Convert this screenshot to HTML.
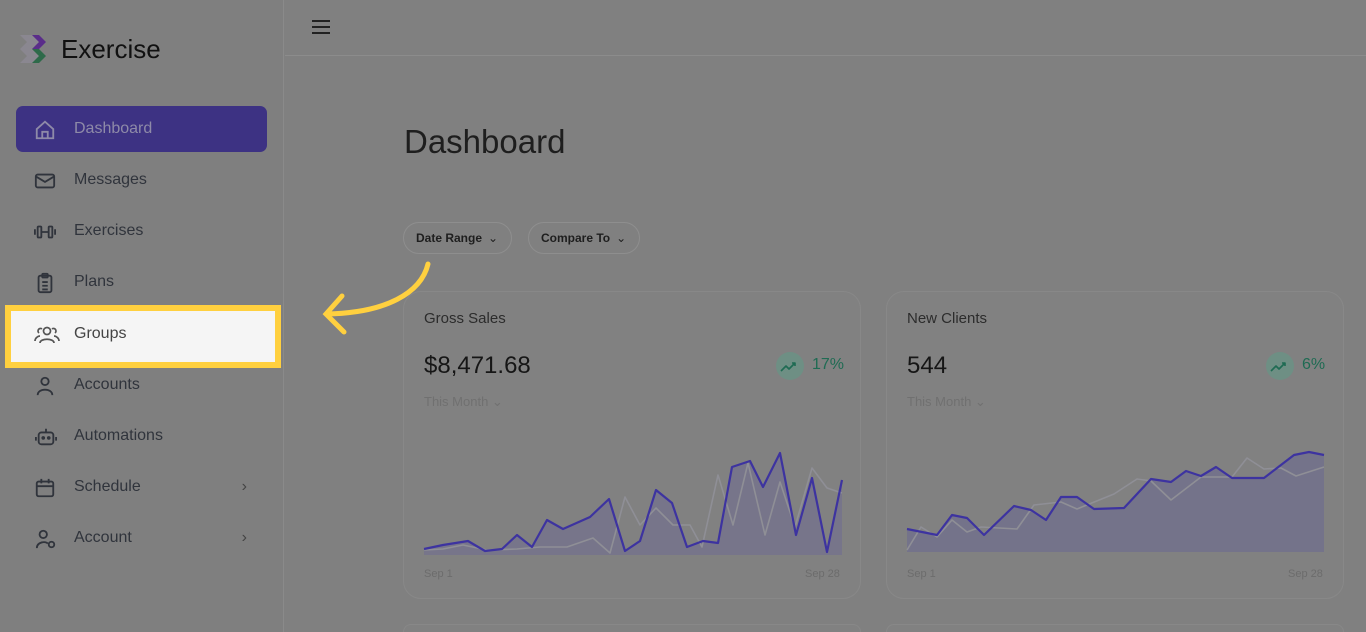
<!DOCTYPE html>
<html style="width:1366px;height:632px;overflow:hidden"><head><meta charset="utf-8"><style>
*{margin:0;padding:0;box-sizing:border-box}
body{width:1366px;height:632px;overflow:hidden;background:#808080;font-family:"Liberation Sans",sans-serif;position:relative}
.side{position:absolute;left:0;top:0;width:284px;height:632px;background:#7f7f7f;border-right:1px solid #8a8a8a}
.top{position:absolute;left:285px;top:0;right:0;height:56px;border-bottom:1px solid #8c8c8c}
.nav{position:absolute;left:16px;width:251px;height:46px;display:flex;align-items:center;color:#30343c;font-size:16px}
.nav svg{position:absolute;left:18px;top:13px}
.nav span{position:absolute;left:58px}
.card{position:absolute;top:291px;width:458px;height:308px;background:#818181;border:1px solid #888;border-radius:18px}
.t{position:absolute;color:#2e2e2e}
.pill{position:absolute;top:222px;height:32px;border:1px solid #8e8e8e;border-radius:16px;font-size:12px;font-weight:bold;color:#1e1e1e;display:flex;align-items:center;padding-left:12px}
</style></head><body>
<div class="side">
 <svg style="position:absolute;left:18px;top:33px" width="34" height="32" viewBox="0 0 34 32"><path d="M2 2h12l7 7-7 7 7 7-7 7H2l7-7-7-7 7-7z" fill="#8a8790"/><path d="M14 2h7l7 7-7 7h-7l7-7z" fill="#5a2d8a"/><path d="M14 16h7l7 7-7 7h-7l7-7z" fill="#2e6a4a"/></svg>
 <div class="t" style="left:61px;top:34px;font-size:26px;color:#111">Exercise</div>
 <div class="nav" style="top:106px;background:#3d3283;border-radius:7px;color:#8e8aa8"><svg width="22" height="22" viewBox="0 0 24 24" fill="none" stroke="#8e8aa8" stroke-width="2"><path d="M3 11l9-8 9 8v10H3z M9 21v-7h6v7"/></svg><span>Dashboard</span></div>
 <div class="nav" style="top:157px"><svg width="22" height="22" viewBox="0 0 24 24" fill="none" stroke="#30343c" stroke-width="2"><rect x="2" y="5" width="20" height="14" rx="2"/><path d="M2 7l10 6 10-6"/></svg><span>Messages</span></div>
 <div class="nav" style="top:208px"><svg width="22" height="22" viewBox="0 0 24 24" fill="none" stroke="#30343c" stroke-width="2"><rect x="4" y="6" width="4" height="12" rx="1"/><rect x="16" y="6" width="4" height="12" rx="1"/><path d="M8 12h8M1 9v6M23 9v6"/></svg><span>Exercises</span></div>
 <div class="nav" style="top:259px"><svg width="22" height="22" viewBox="0 0 24 24" fill="none" stroke="#30343c" stroke-width="2"><rect x="5" y="4" width="14" height="18" rx="2"/><rect x="9" y="2" width="6" height="4" rx="1"/><path d="M9 11h6M9 15h6M9 19h6"/></svg><span>Plans</span></div>
 <div style="position:absolute;left:5px;top:305px;width:276px;height:63px;border:6px solid #ffd03f;background:#f5f5f5"></div>
 <div class="nav" style="top:311px;color:#444"><svg width="26" height="22" viewBox="0 0 26 22" fill="none" stroke="#555" stroke-width="1.7"><circle cx="13" cy="7" r="3.5"/><path d="M6 19c0-5 14-5 14 0M1 17c0-3 3-5 5-5M25 17c0-3-3-5-5-5M5 9a2.5 2.5 0 1 1 3-4M21 9a2.5 2.5 0 1 0-3-4"/></svg><span>Groups</span></div>
 <div class="nav" style="top:362px"><svg width="22" height="22" viewBox="0 0 24 24" fill="none" stroke="#30343c" stroke-width="2"><circle cx="12" cy="7" r="4"/><path d="M4 22c0-8 16-8 16 0"/></svg><span>Accounts</span></div>
 <div class="nav" style="top:413px"><svg width="24" height="22" viewBox="0 0 24 24" fill="none" stroke="#30343c" stroke-width="2"><rect x="4" y="7" width="16" height="13" rx="3"/><path d="M12 3v4M1 12v4M23 12v4"/><circle cx="9" cy="13" r="1"/><circle cx="15" cy="13" r="1"/></svg><span>Automations</span></div>
 <div class="nav" style="top:464px"><svg width="22" height="22" viewBox="0 0 24 24" fill="none" stroke="#30343c" stroke-width="2"><rect x="3" y="5" width="18" height="16" rx="2"/><path d="M3 10h18M8 2v5M16 2v5"/></svg><span>Schedule</span><b style="position:absolute;right:20px;font-weight:normal;color:#444">›</b></div>
 <div class="nav" style="top:515px"><svg width="24" height="22" viewBox="0 0 24 24" fill="none" stroke="#30343c" stroke-width="2"><circle cx="9" cy="7" r="4"/><path d="M2 22c0-7 10-8 12-5"/><circle cx="18" cy="18" r="3"/></svg><span>Account</span><b style="position:absolute;right:20px;font-weight:normal;color:#444">›</b></div>
</div>
<div class="top"><div style="position:absolute;left:27px;top:20px;width:18px;height:2px;background:#222;box-shadow:0 6px 0 #222,0 12px 0 #222"></div></div>
<div class="t" style="left:404px;top:123px;font-size:33px;color:#1e1e1e">Dashboard</div>
<div class="pill" style="left:403px;width:109px">Date Range <span style="margin-left:6px;font-weight:normal">⌄</span></div>
<div class="pill" style="left:528px;width:112px">Compare To <span style="margin-left:6px;font-weight:normal">⌄</span></div>
<svg style="position:absolute;left:316px;top:258px" width="120" height="80" viewBox="0 0 120 80" fill="none" stroke="#ffd03f" stroke-width="5" stroke-linecap="round"><path d="M112 6C105 35 70 55 10 56M26 38L10 56 28 74"/></svg>

<div class="card" style="left:403px"></div>
<div class="card" style="left:886px"></div>
<div class="t" style="left:424px;top:310px;font-size:15px;color:#2c2c2c">Gross Sales</div>
<div class="t" style="left:424px;top:352px;font-size:24px;color:#161616">$8,471.68</div>
<div class="t" style="left:424px;top:394px;font-size:13px;color:#707070">This Month ⌄</div>
<div style="position:absolute;left:776px;top:352px;width:28px;height:28px;border-radius:50%;background:#6e8f84"></div>
<div class="t" style="left:812px;top:356px;font-size:16px;color:#1f6b53">17%</div>
<div class="t" style="left:907px;top:310px;font-size:15px;color:#2c2c2c">New Clients</div>
<div class="t" style="left:907px;top:352px;font-size:24px;color:#161616">544</div>
<div class="t" style="left:907px;top:394px;font-size:13px;color:#707070">This Month ⌄</div>
<div style="position:absolute;left:1266px;top:352px;width:28px;height:28px;border-radius:50%;background:#6e8f84"></div>
<div class="t" style="left:1302px;top:356px;font-size:16px;color:#1f6b53">6%</div>
<svg style="position:absolute;left:0;top:0" width="1366" height="632" fill="none" stroke-linejoin="round" stroke-width="2.2">
<path d="M781 371l5-5 3 3 6-6M792 363h3v3M1271 371l5-5 3 3 6-6M1282 363h3v3" stroke="#1f6b53" stroke-width="1.6"/>
<polygon points="424,549 443,545 468,541 485,551 502,549 517,535 532,547 547,520 563,529 590,517 609,499 625,551 640,541 656,490 672,503 687,547 703,541 718,543 732,467 750,461 763,487 780,453 796,535 812,478 827,552 842,480 842,555 424,555" fill="#77758a" stroke="none"/>
<polyline points="424,550 443,549 463,545 487,550 517,549 540,547 567,547 593,538 610,553 625,497 640,525 656,508 673,525 690,525 702,547 718,475 733,525 748,463 765,535 780,482 795,527 812,468 827,488 842,493" stroke="#8f8f96" stroke-width="1.6"/>
<polyline points="424,549 443,545 468,541 485,551 502,549 517,535 532,547 547,520 563,529 590,517 609,499 625,551 640,541 656,490 672,503 687,547 703,541 718,543 732,467 750,461 763,487 780,453 796,535 812,478 827,552 842,480" stroke="#3d33a0"/>
<polygon points="907,529 937,535 952,515 967,518 984,535 1014,506 1031,510 1046,520 1061,497 1077,497 1094,509 1124,508 1151,479 1171,482 1186,471 1201,476 1216,467 1232,478 1264,478 1294,455 1309,452 1324,455 1324,552 907,552" fill="#74738a" stroke="none"/>
<polyline points="907,550 921,527 937,537 952,520 967,532 981,527 1017,529 1034,505 1061,502 1077,509 1114,494 1137,479 1151,481 1171,500 1201,477 1232,477 1247,458 1264,469 1281,468 1296,476 1324,467" stroke="#8f8f96" stroke-width="1.6"/>
<polyline points="907,529 937,535 952,515 967,518 984,535 1014,506 1031,510 1046,520 1061,497 1077,497 1094,509 1124,508 1151,479 1171,482 1186,471 1201,476 1216,467 1232,478 1264,478 1294,455 1309,452 1324,455" stroke="#3d33a0"/>
</svg>
<div class="t" style="left:424px;top:568px;font-size:11px;color:#6c6c6c">Sep 1</div>
<div class="t" style="left:805px;top:568px;font-size:11px;color:#6c6c6c">Sep 28</div>
<div class="t" style="left:907px;top:568px;font-size:11px;color:#6c6c6c">Sep 1</div>
<div class="t" style="left:1288px;top:568px;font-size:11px;color:#6c6c6c">Sep 28</div>
<div class="card" style="left:403px;top:624px;height:8px;border-bottom:none;border-radius:18px 18px 0 0"></div>
<div class="card" style="left:886px;top:624px;height:8px;border-bottom:none;border-radius:18px 18px 0 0"></div>
</body></html>
